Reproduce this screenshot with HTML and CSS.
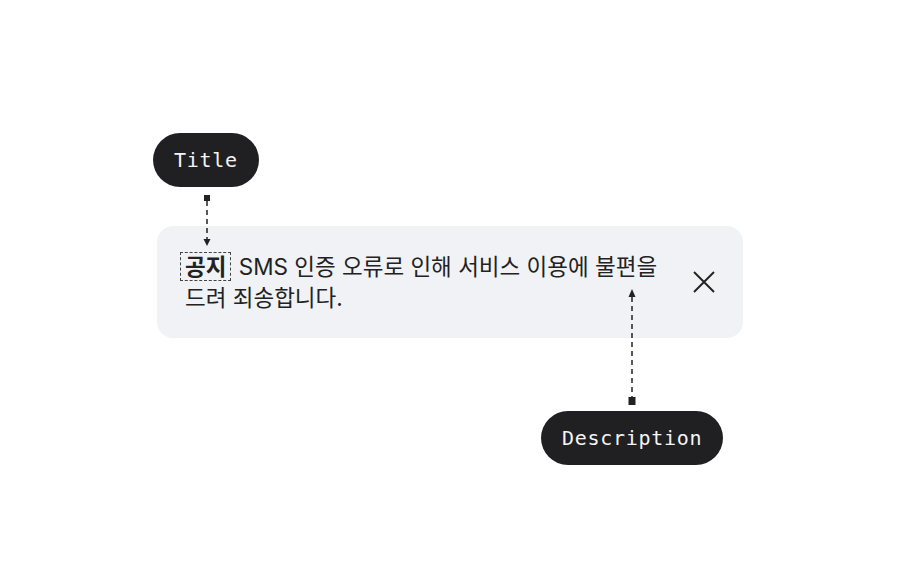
FILE: index.html
```html
<!DOCTYPE html>
<html lang="ko">
<head>
    <meta charset="UTF-8">
    <meta name="viewport" content="width=device-width, initial-scale=1.0">
    <title>Notice anatomy</title>
    <link rel="stylesheet" href="styles.css">
</head>
<body>
    <main class="stage">
        <div class="spec">
            <div class="notice">
                <p class="notice-text"><span class="notice-title">공지</span> SMS 인증 오류로 인해 서비스 이용에 불편을 드려 죄송합니다.</p>
                <button class="notice-close" aria-label="닫기">
                    <svg width="24" height="24" viewBox="0 0 24 24" fill="none" stroke="#222" stroke-width="1.9" stroke-linecap="butt">
                        <path d="M2 2 L22 22 M22 2 L2 22"/>
                    </svg>
                </button>
            </div>

            <!-- annotations -->
            <span class="label label-title">Title</span>
            <svg class="pointer pointer-title" width="12" height="52" viewBox="0 0 12 52">
                <rect x="3" y="0" width="6" height="6" fill="#222"/>
                <path d="M6 6 V44" stroke="#222" stroke-width="1.5" stroke-dasharray="5 4"/>
                <path d="M2.5 44 L9.5 44 L6 51 Z" fill="#222"/>
            </svg>

            <svg class="pointer pointer-desc" width="12" height="117" viewBox="0 0 12 117">
                <path d="M6 0 L9.5 8 L2.5 8 Z" fill="#222"/>
                <path d="M6 8 V109" stroke="#222" stroke-width="1.5" stroke-dasharray="5 4"/>
                <rect x="2.5" y="108" width="7" height="8" fill="#222"/>
            </svg>
            <span class="label label-desc">Description</span>
        </div>
    </main>
</body>
</html>
```

FILE: styles.css
```css
body {
    margin: 0;
    background: #fff;
    font-family: 'Inter', 'Noto Sans CJK KR', sans-serif;
    color: #222;
}

.stage {
    height: 564px;
    display: flex;
    align-items: center;
    justify-content: center;
}

.spec {
    position: relative;
    width: 586px;
}

/* Notice card */
.notice {
    display: flex;
    align-items: center;
    gap: 22px;
    padding: 25px 27px 25px 28px;
    background: #f1f2f5;
    border-radius: 16px;
}

.notice-text {
    flex: 1;
    margin: 0;
    font-size: 22.5px;
    line-height: 31px;
}

.notice-title {
    font-weight: 700;
    padding: 0 4px;
    margin-left: -5px;
    margin-right: 1px;
    border: 1px dashed #444;
}

.notice-close {
    flex: none;
    width: 24px;
    height: 24px;
    padding: 0;
    border: 0;
    background: none;
    display: flex;
}

/* Annotation labels */
.label {
    position: absolute;
    height: 54px;
    padding: 0 21px;
    box-sizing: border-box;
    display: flex;
    align-items: center;
    background: #202022;
    color: #f4f4f4;
    border-radius: 27px;
    font-family: 'DejaVu Sans Mono', 'Liberation Mono', monospace;
    font-size: 20px;
    letter-spacing: 0.7px;
}

.label-title {
    left: -4px;
    top: -93px;
}

.label-desc {
    left: 384px;
    top: 185px;
}

.pointer {
    position: absolute;
}

.pointer-title {
    left: 44px;
    top: -31px;
}

.pointer-desc {
    left: 468.5px;
    top: 63px;
}
```
